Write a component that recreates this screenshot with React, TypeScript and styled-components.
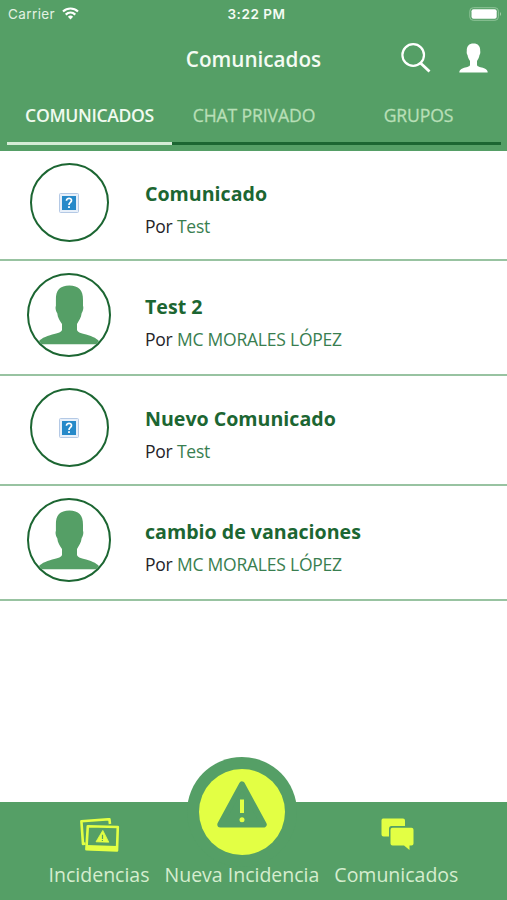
import React from "react";
import styled, { createGlobalStyle } from "styled-components";

const GREEN = "#559f66";
const DARK = "#1c6632";
const LIME = "#e3ff44";

const Global = createGlobalStyle`
  * { box-sizing: border-box; }
  body { margin: 0; background: #fff; font-family: "Open Sans", "Noto Sans", sans-serif; }
`;

const Screen = styled.div`
  width: 507px;
  height: 900px;
  display: flex;
  flex-direction: column;
  background: #fff;
  overflow: hidden;
`;

const Header = styled.header`
  height: 151px;
  flex: none;
  background: ${GREEN};
  color: #f4fbf3;
`;

const StatusBar = styled.div`
  height: 27px;
  display: grid;
  grid-template-columns: 1fr auto 1fr;
  align-items: center;
  padding: 1px 5px 0 8px;
  font-family: Inter, Roboto, sans-serif;
  font-size: 13.5px;
  line-height: 26px;
`;

const Carrier = styled.div`
  display: flex;
  align-items: center;
  gap: 7px;
  color: #e3f2e2;
  letter-spacing: 0.4px;
  svg { margin-top: -1px; }
`;

const Clock = styled.div`
  font-weight: 600;
  font-size: 13.5px;
  letter-spacing: 0.55px;
  padding-left: 3px;
`;

const BatterySlot = styled.div`
  display: flex;
  justify-content: flex-end;
  padding-bottom: 1px;
`;

const TitleBar = styled.div`
  height: 62px;
  display: grid;
  grid-template-columns: 1fr auto 1fr;
  align-items: center;
  padding: 0 19px 0 19px;
`;

const Title = styled.h1`
  margin: 0;
  padding-top: 2px;
  font-size: 20.7px;
  font-weight: 600;
  line-height: 28px;
  grid-column: 2;
`;

const Actions = styled.div`
  display: flex;
  justify-content: flex-end;
  align-items: center;
  gap: 28px;
`;

const Tabs = styled.nav`
  display: grid;
  grid-template-columns: 165px 164px 165px;
  padding: 0 6px 0 7px;
`;

const Tab = styled.div<{ $active?: boolean }>`
  height: 56px;
  padding-top: 14px;
  text-align: center;
  font-size: 17.6px;
  letter-spacing: ${(p) => (p.$active ? "-0.35px" : "-0.12px")};
  line-height: 24px;
  font-weight: ${(p) => (p.$active ? 600 : 500)};
  -webkit-text-stroke: ${(p) => (p.$active ? "0" : "0.3px")};
  color: ${(p) => (p.$active ? "#f0faef" : "#b8dfb7")};
  border-bottom: 3px solid ${(p) => (p.$active ? "#d5ecd6" : DARK)};
`;

const List = styled.main`
  flex: 1;
`;

const Row = styled.article<{ $tall?: boolean }>`
  display: flex;
  height: ${(p) => (p.$tall ? 115 : 110)}px;
  border-bottom: 2px solid #98c3a1;
`;

const AvatarCell = styled.div`
  width: 138px;
  padding-top: 12px;
  display: flex;
  justify-content: center;
  align-items: flex-start;
`;

const Avatar = styled.div<{ $large?: boolean }>`
  width: ${(p) => (p.$large ? 84 : 79)}px;
  height: ${(p) => (p.$large ? 84 : 79)}px;
  border: 2px solid ${DARK};
  border-radius: 50%;
  overflow: hidden;
  display: flex;
  align-items: center;
  justify-content: center;
`;

const Info = styled.div<{ $tall?: boolean }>`
  padding: ${(p) => (p.$tall ? 31 : 28)}px 0 0 7px;
`;

const RowTitle = styled.h2`
  margin: 0;
  font-size: 19.6px;
  line-height: 30px;
  font-weight: 700;
  color: ${DARK};
`;

const Byline = styled.p`
  margin: 4px 0 0;
  font-size: 17.5px;
  letter-spacing: -0.22px;
  line-height: 26px;
  color: #242428;
  span { color: #397e50; }
`;

const Footer = styled.footer`
  position: relative;
  flex: none;
  height: 98px;
  background: ${GREEN};
  display: flex;
  justify-content: center;
  gap: 15px;
`;

const NavItem = styled.div`
  display: flex;
  flex-direction: column;
  align-items: center;
  justify-content: space-between;
  padding: 16px 0 11px;
  color: #d6edcf;
  font-size: 19.5px;
  line-height: 28px;
  white-space: nowrap;
  svg { margin-left: 2px; }
`;

const ReportButton = styled.div`
  position: absolute;
  left: 187px;
  top: -45px;
  width: 110px;
  height: 110px;
  border-radius: 50%;
  background: ${GREEN};
  display: flex;
  justify-content: center;
  padding-top: 12px;
`;

const Disc = styled.div`
  width: 86px;
  height: 86px;
  border-radius: 50%;
  background: ${LIME};
  display: flex;
  justify-content: center;
  padding-top: 12px;
`;

const Wifi = () => (
  <svg width="17" height="13" viewBox="0 0 17 13" fill="none" stroke="#fff" strokeWidth="2.2">
    <path d="M1 4.5C5.3.5 11.7.5 16 4.5M3.7 7.6C6.5 5 10.5 5 13.3 7.6" />
    <path d="M8.5 12.4L5.9 9.7Q8.5 7.5 11.1 9.7Z" fill="#fff" stroke="none" />
  </svg>
);

const Battery = () => (
  <svg width="33" height="14" viewBox="0 0 33 14">
    <rect x=".8" y=".7" width="28.6" height="12.6" rx="3.5" fill="none" stroke="#8fc499" />
    <rect x="2.5" y="2.3" width="25.2" height="9.4" rx="2" fill="#fff" />
    <path d="M31 5Q33 7 31 9Z" fill="#a4d2aa" />
  </svg>
);

const Search = () => (
  <svg width="30" height="30" viewBox="0 0 30 30" fill="none" stroke="#fff">
    <circle cx="12.2" cy="12" r="10.8" strokeWidth="2.2" />
    <path d="M19.7 20.2L28.5 28.6" strokeWidth="2.8" />
  </svg>
);

const User = () => (
  <svg width="29" height="30" viewBox="0 0 29 30" fill="#fff">
    <path d="M14.5 .5C10 .5 7.6 3 7.8 8C7.5 9.5 7.8 11 8.5 12C9 15 10 16.5 11 18V22C10.5 24 7 24 4 25.2C1.5 26.1.3 27.3.3 29.5H28.7C28.7 27.3 27.5 26.1 25 25.2C22 24 18.5 24 18 22V18C19 16.5 20 15 20.5 12C21.2 11 21.5 9.5 21.2 8C21.4 3 19 .5 14.5 .5Z" />
  </svg>
);

const Portrait = () => (
  <svg width="80" height="80" viewBox="0 0 80 80">
    <path
      fill={GREEN}
      d="M40.4 10.5C31 10.5 26.6 15.2 26.9 25V31C26.2 32 26.7 36 28.2 38C28.7 43 31 46 33 49V55C32 58 27 58.5 21 60.2C14 62.2 10 65 7.5 69.3H72.5C70 65 66 62.2 59.5 60.2C53 58.5 49 58 48 55V49C49.5 46 52.2 43 52.7 38C54.2 36 54.7 32 54 31V25C54.3 15.2 49.4 10.5 40.4 10.5Z"
    />
  </svg>
);

const MissingPicture = () => (
  <svg width="20" height="20" viewBox="0 0 20 20">
    <rect x=".5" y=".5" width="19" height="19" rx="1" fill="#e8f0fa" stroke="#b4c9e5" />
    <rect x="3" y="3" width="14" height="14" fill="#2689c9" />
    <path d="M7.5 7.7C7.5 4.5 12.7 4.7 12.5 7.6C12.4 9.5 10 9.4 10 11.9" fill="none" stroke="#fff" strokeWidth="1.7" />
    <rect x="9.1" y="13.2" width="1.8" height="1.8" fill="#fff" />
  </svg>
);

const Photos = () => (
  <svg width="40" height="35" viewBox="0 0 40 35" fill="none" stroke={LIME}>
    <path d="M5.5 25.5L3 26L1.4 3.2L29.4 1.2L30 6" strokeWidth="2.6" strokeLinejoin="round" />
    <path d="M7.8 8.2L37.8 9L37 32.4L6.4 31.3Z" strokeWidth="2.6" strokeLinejoin="round" />
    <path d="M6.5 29.4L37 30.4" strokeWidth="5" />
    <path d="M22.8 12.4L28.8 24.2L16 23.8Z" fill={LIME} strokeWidth=".8" strokeLinejoin="round" />
    <path d="M22.5 16.8V21M22.4 22V23" stroke={GREEN} strokeWidth="1.2" />
  </svg>
);

const Chat = () => (
  <svg width="33" height="33" viewBox="0 0 33 33" fill={LIME}>
    <path d="M2 .5H22Q24 .5 24 2.5V8H10.5Q8 8 8 11V18.5H2.5Q.5 18.5.5 16.5V2.5Q.5.5 2 .5Z" />
    <path d="M11.5 9.7H30.5Q32.5 9.7 32.5 11.7V25.5Q32.5 27.5 30.5 27.5H28.5V32L23 27.5H11.5Q9.5 27.5 9.5 25.5V11.7Q9.5 9.7 11.5 9.7Z" />
  </svg>
);

const Warning = () => (
  <svg width="50" height="47" viewBox="0 0 50 47">
    <path d="M25 3.5L46.7 43.5H3.3Z" fill={GREEN} stroke={GREEN} strokeWidth="6" strokeLinejoin="round" />
    <path d="M25 18.5V32" stroke={LIME} strokeWidth="4" />
    <circle cx="25" cy="38.8" r="2.5" fill={LIME} />
  </svg>
);

const messages = [
  { title: "Comunicado", author: "Test", photo: false },
  { title: "Test 2", author: "MC MORALES LÓPEZ", photo: true },
  { title: "Nuevo Comunicado", author: "Test", photo: false },
  { title: "cambio de vanaciones", author: "MC MORALES LÓPEZ", photo: true },
];

export default function App() {
  return (
    <Screen>
      <Global />
      <Header>
        <StatusBar>
          <Carrier>Carrier <Wifi /></Carrier>
          <Clock>3:22 PM</Clock>
          <BatterySlot><Battery /></BatterySlot>
        </StatusBar>
        <TitleBar>
          <Title>Comunicados</Title>
          <Actions><Search /><User /></Actions>
        </TitleBar>
        <Tabs>
          <Tab $active>COMUNICADOS</Tab>
          <Tab>CHAT PRIVADO</Tab>
          <Tab>GRUPOS</Tab>
        </Tabs>
      </Header>
      <List>
        {messages.map((m) => (
          <Row key={m.title} $tall={m.photo}>
            <AvatarCell>
              <Avatar $large={m.photo}>{m.photo ? <Portrait /> : <MissingPicture />}</Avatar>
            </AvatarCell>
            <Info $tall={m.photo}>
              <RowTitle>{m.title}</RowTitle>
              <Byline>Por <span>{m.author}</span></Byline>
            </Info>
          </Row>
        ))}
      </List>
      <Footer>
        <ReportButton><Disc><Warning /></Disc></ReportButton>
        <NavItem><Photos />Incidencias</NavItem>
        <NavItem><span />Nueva Incidencia</NavItem>
        <NavItem><Chat />Comunicados</NavItem>
      </Footer>
    </Screen>
  );
}
